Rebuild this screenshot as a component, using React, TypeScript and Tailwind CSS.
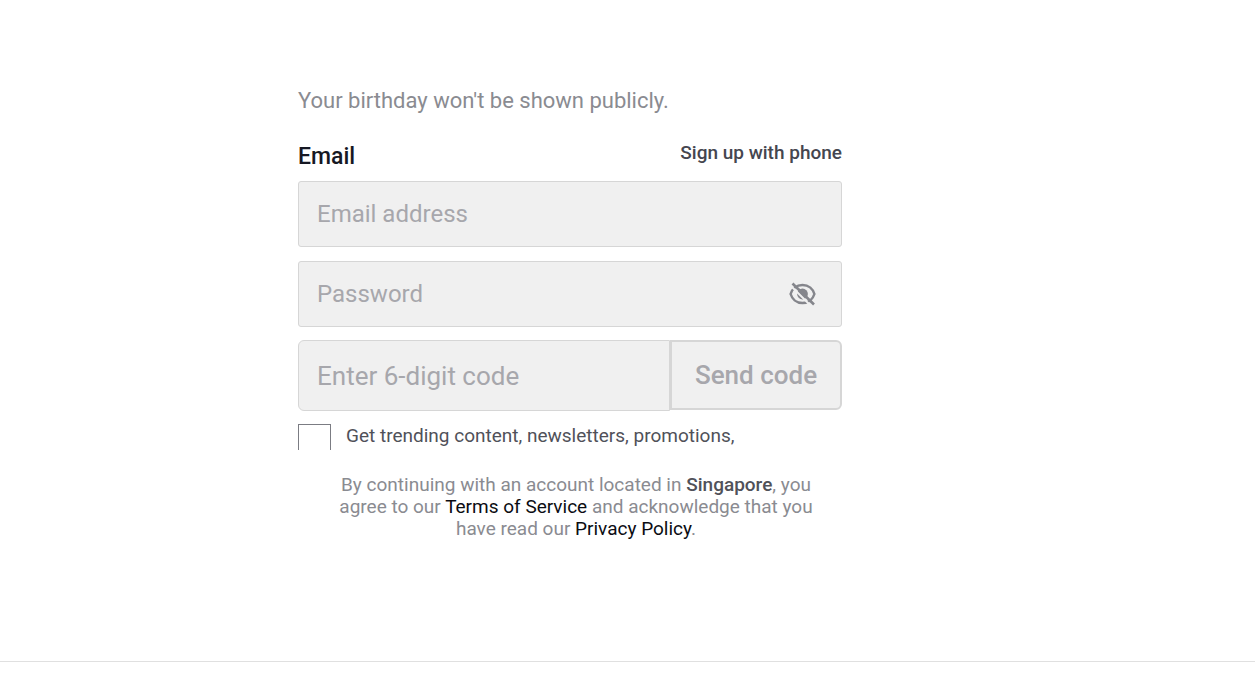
import { useState } from "react";

const fieldClass =
  "border border-[#d6d6d6] bg-[#f0f0f0] px-[18px] text-[#161823] outline-none placeholder:text-[#a7a7ac]";

function HiddenEyeIcon() {
  return (
    <svg viewBox="0 0 28 24" className="h-6 w-7" fill="none" aria-hidden="true">
      <path
        d="M14.500 3C8.200 3 4 7.300 2.600 12c1.400 4.700 5.600 9 11.900 9s10.500-4.300 11.900-9C25 7.300 20.800 3 14.500 3Z"
        stroke="#85868c"
        strokeWidth="2.5"
      />
      <circle cx="14.5" cy="12" r="5.4" fill="#85868c" />
      <path d="M3 4 22.500 23.500" stroke="#f0f0f0" strokeWidth="2" />
      <path d="M4.5 1.5 26 22.5" stroke="#85868c" strokeWidth="2.6" />
    </svg>
  );
}

export default function App() {
  const [showPassword, setShowPassword] = useState(false);

  return (
    <div className="min-h-screen bg-white font-['Roboto',sans-serif]">
      <main className="border-b border-[#e0e0e0] pt-[84px] pb-[121px] pr-[115px]">
        <form className="mx-auto w-full max-w-[544px]">
          <p className="text-[22px] leading-[34px] text-[#8a8b91]">
            Your birthday won't be shown publicly.
          </p>

          {/* Email */}
          <div className="mt-[21px] flex justify-between">
            <label htmlFor="email" className="pt-1 text-[23px] leading-[28px] font-medium text-[#161823]">
              Email
            </label>
            <a href="#phone" className="text-[19px] leading-[28px] font-medium text-[#45464f]">
              Sign up with phone
            </a>
          </div>
          <input
            id="email"
            type="email"
            placeholder="Email address"
            className={`${fieldClass} mt-[10px] block h-[66px] w-full rounded-[3px] text-[24px]`}
          />

          {/* Password */}
          <div className="relative mt-[14px]">
            <input
              type={showPassword ? "text" : "password"}
              placeholder="Password"
              aria-label="Password"
              className={`${fieldClass} block h-[66px] w-full rounded-[3px] text-[24px]`}
            />
            <button
              type="button"
              aria-label="Show password"
              onClick={() => setShowPassword(!showPassword)}
              className="absolute inset-y-0 right-[26px] flex items-center"
            >
              <HiddenEyeIcon />
            </button>
          </div>

          {/* Verification code */}
          <div className="mt-[13px] flex items-start">
            <input
              type="text"
              placeholder="Enter 6-digit code"
              aria-label="Enter 6-digit code"
              className={`${fieldClass} h-[71px] min-w-0 flex-1 rounded-l-[6px] text-[26px]`}
            />
            <button
              type="button"
              className="h-[70px] w-[172px] rounded-r-[6px] border-2 border-[#d6d6d6] bg-[#f0f0f0] text-[26px] font-medium text-[#a7a7ac]"
            >
              Send code
            </button>
          </div>

          {/* Newsletter opt-in */}
          <div className="mt-[13px] flex h-[26px] gap-[15px] overflow-hidden">
            <input
              id="newsletter"
              type="checkbox"
              className="h-[33px] w-[33px] shrink-0 appearance-none border border-[#7b7c83]"
            />
            <label htmlFor="newsletter" className="text-[19px] leading-[24px] text-[#505159]">
              Get trending content, newsletters, promotions,
            </label>
          </div>

          <p className="mt-6 pl-3 text-center text-[19px] leading-[22px] text-[#8a8b91]">
            By continuing with an account located in{" "}
            <span className="font-medium text-[#505159]">Singapore</span>, you
            <br />
            agree to our{" "}
            <a href="#terms" className="text-[#0b0c12]">
              Terms of Service
            </a>{" "}
            and acknowledge that you
            <br />
            have read our{" "}
            <a href="#privacy" className="text-[#0b0c12]">
              Privacy Policy
            </a>
            .
          </p>
        </form>
      </main>
    </div>
  );
}
